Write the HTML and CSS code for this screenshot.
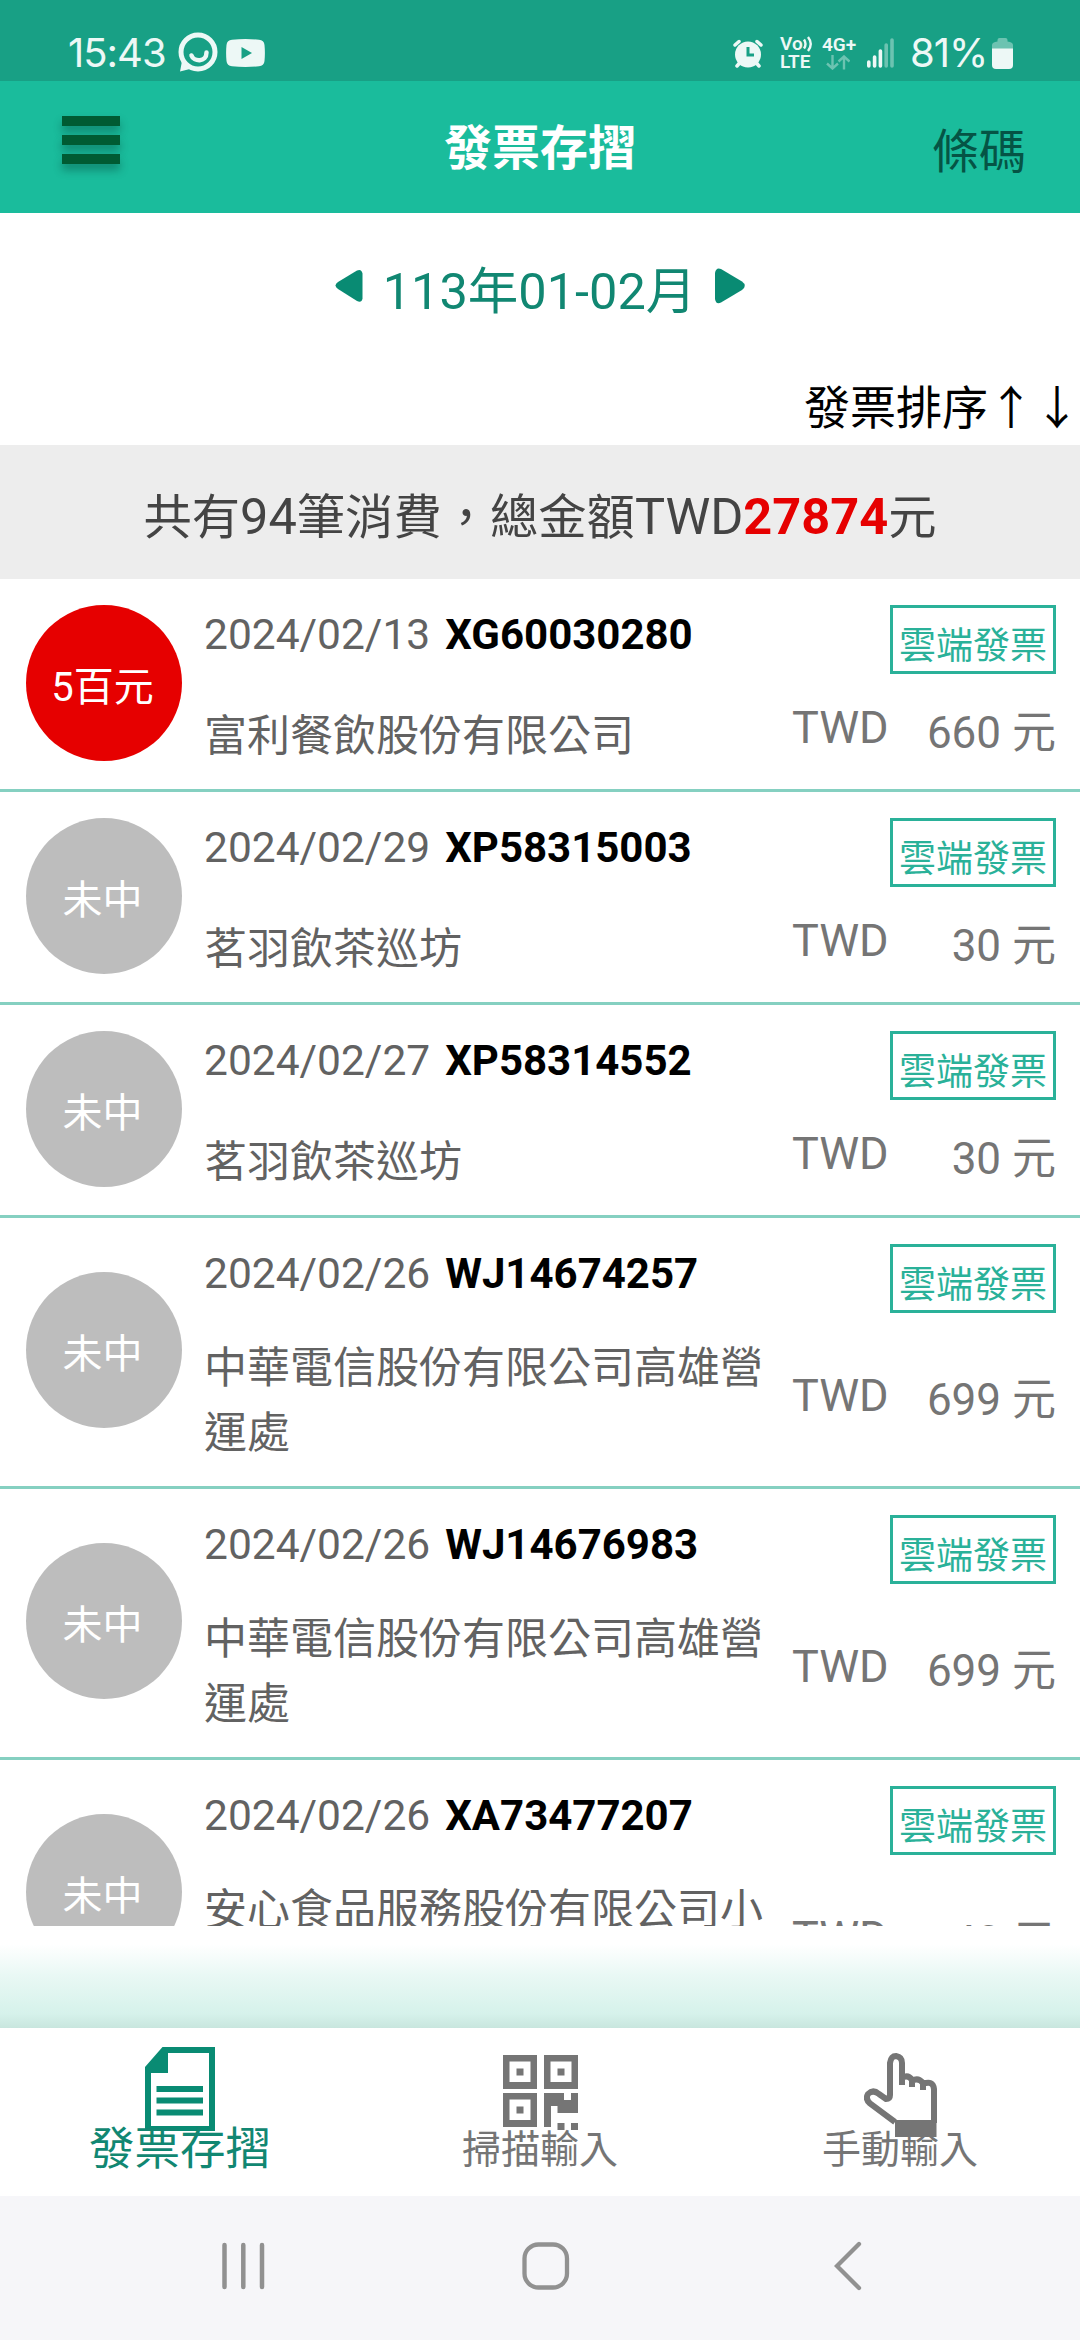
FILE: index.html
```
<!DOCTYPE html>
<html lang="zh-TW">
<head>
    <meta charset="UTF-8">
    <meta name="viewport" content="width=device-width, initial-scale=1.0">
    <title>發票存摺</title>
    <link rel="stylesheet" href="styles.css">
</head>
<body>

<div class="status-bar">
    <div class="status-left">
        <span class="clock">15:43</span>
        <svg class="icon-chat" width="40" height="42" viewBox="0 0 40 42">
            <circle cx="20" cy="20" r="17" fill="none" stroke="#edf8f6" stroke-width="5"/>
            <path d="M4 29 L2 39.5 L12 37 Z" fill="#edf8f6"/>
            <path d="M13.5 23.5 C15.5 29.5 28.5 31 28.5 20.5" fill="none" stroke="#edf8f6" stroke-width="4.5" stroke-linecap="round"/>
        </svg>
        <svg width="39" height="28" viewBox="0 0 39 28">
            <path d="M6 .7 Q19.500 -.5 33 .7 Q38 1 38.500 6 Q39.300 14 38.500 22 Q38 27 33 27.300 Q19.500 28.500 6 27.300 Q1 27 .5 22 Q-.3 14 .5 6 Q1 1 6 .7 Z" fill="#edf8f6"/>
            <path d="M15.500 8 L26 14 L15.500 20 Z" fill="#18a085"/>
        </svg>
    </div>
    <div class="status-right">
        <svg class="icon-alarm" width="30" height="29" viewBox="0 0 30 29">
            <circle cx="15" cy="15.500" r="13" fill="#edf8f6"/>
            <path d="M2 6 L6 2.500 M28 6 L24 2.500" stroke="#edf8f6" stroke-width="3.500" stroke-linecap="round"/>
            <path d="M4 27 L7 23.500 M26 27 L23 23.500" stroke="#edf8f6" stroke-width="3.500" stroke-linecap="round"/>
            <path d="M15 8 V16 H21" fill="none" stroke="#18a085" stroke-width="3"/>
        </svg>
        <div class="volte">
            <span>Vo<svg width="10" height="16" viewBox="0 0 10 16"><path d="M1 3.500 Q4 8 1 12.500 M5 1 Q10.500 8 5 15" fill="none" stroke="#edf8f6" stroke-width="2.400"/></svg></span>
            <span>LTE</span>
        </div>
        <div class="network">
            <span>4G+</span>
            <svg width="24" height="15" viewBox="0 0 24 15">
                <path d="M6.500 0 V13 M1 8.500 L6.500 13.500 L12 8.500 M18 14.500 V2 M12.500 6.500 L18 1.500 L23.500 6.500" fill="none" stroke="#6cc3b1" stroke-width="2.400"/>
            </svg>
        </div>
        <svg class="icon-signal" width="28" height="30" viewBox="0 0 28 30">
            <path d="M1.800 24 V28 M7.600 19 V28 M13.400 13 V28" stroke="#edf8f6" stroke-width="3.600" stroke-linecap="round"/>
            <path d="M19.200 7 V28 M25 2 V28" stroke="#6cc3b1" stroke-width="3.600" stroke-linecap="round"/>
        </svg>
        <span class="battery-text">81%</span>
        <svg width="21" height="31" viewBox="0 0 21 31">
            <path d="M0 12 V7 Q0 4 5.500 3.500 V2 Q5.500 0 7.500 0 H13.500 Q15.500 0 15.500 2 V3.500 Q21 4 21 7 V12 Z" fill="#6cc3b1"/>
            <path d="M0 10.500 H21 V27 Q21 31 17 31 H4 Q0 31 0 27 Z" fill="#edf8f6"/>
        </svg>
    </div>
</div>

<header>
    <button class="menu-btn" aria-label="選單">
        <span></span>
        <span></span>
        <span></span>
    </button>
    <h1>發票存摺</h1>
    <a class="barcode-link">條碼</a>
</header>

<div class="month-picker">
    <svg width="28" height="34" viewBox="0 0 28 34">
        <path d="M27.500 4.500 V29.500 Q26.500 34.500 22 32 L3 20 Q-2 16.500 3 13 L22 1.500 Q26.500 -.5 27.500 4.500 Z" fill="#098b73"/>
    </svg>
    <span class="month">113年01-02月</span>
    <svg class="next" width="30" height="36" viewBox="0 0 30 36">
        <path d="M0 5 V31 Q1 37 6 34.500 L27 22 Q32.500 17.500 27 13.500 L6 1 Q1 -1 0 5 Z" fill="#098b73"/>
    </svg>
</div>

<div class="sort">發票排序↑↓</div>

<div class="summary">共有<span>94</span>筆消費，總金額<span>TWD<b>27874</b></span>元</div>

<div class="invoice-list">
    <div class="invoice">
        <div class="prize win">5百元</div>
        <div class="info">
            <div class="top">
                <span class="date">2024/02/13</span>
                <span class="number">XG60030280</span>
                <span class="tag">雲端發票</span>
            </div>
            <div class="bottom">
                <div class="company">富利餐飲股份有限公司</div>
                <div class="currency">TWD</div>
                <div class="amount">660 元</div>
            </div>
        </div>
    </div>

    <div class="invoice">
        <div class="prize">未中</div>
        <div class="info">
            <div class="top">
                <span class="date">2024/02/29</span>
                <span class="number">XP58315003</span>
                <span class="tag">雲端發票</span>
            </div>
            <div class="bottom">
                <div class="company">茗羽飲茶巡坊</div>
                <div class="currency">TWD</div>
                <div class="amount">30 元</div>
            </div>
        </div>
    </div>

    <div class="invoice">
        <div class="prize">未中</div>
        <div class="info">
            <div class="top">
                <span class="date">2024/02/27</span>
                <span class="number">XP58314552</span>
                <span class="tag">雲端發票</span>
            </div>
            <div class="bottom">
                <div class="company">茗羽飲茶巡坊</div>
                <div class="currency">TWD</div>
                <div class="amount">30 元</div>
            </div>
        </div>
    </div>

    <div class="invoice tall">
        <div class="prize">未中</div>
        <div class="info">
            <div class="top">
                <span class="date">2024/02/26</span>
                <span class="number">WJ14674257</span>
                <span class="tag">雲端發票</span>
            </div>
            <div class="bottom">
                <div class="company">中華電信股份有限公司高雄營運處</div>
                <div class="currency">TWD</div>
                <div class="amount">699 元</div>
            </div>
        </div>
    </div>

    <div class="invoice tall">
        <div class="prize">未中</div>
        <div class="info">
            <div class="top">
                <span class="date">2024/02/26</span>
                <span class="number">WJ14676983</span>
                <span class="tag">雲端發票</span>
            </div>
            <div class="bottom">
                <div class="company">中華電信股份有限公司高雄營運處</div>
                <div class="currency">TWD</div>
                <div class="amount">699 元</div>
            </div>
        </div>
    </div>

    <div class="invoice tall">
        <div class="prize">未中</div>
        <div class="info">
            <div class="top">
                <span class="date">2024/02/26</span>
                <span class="number">XA73477207</span>
                <span class="tag">雲端發票</span>
            </div>
            <div class="bottom">
                <div class="company">安心食品服務股份有限公司小</div>
                <div class="currency">TWD</div>
                <div class="amount">40 元</div>
            </div>
        </div>
    </div>
</div>

<div class="fade"></div>

<div class="tabs">
    <div class="tab active">
        <svg width="70" height="84" viewBox="0 0 70 84">
            <path d="M17.500 0 H70 V84 H0 V20 Z M23 6 V26 H6 V79 H64 V6 Z" fill="#098b73" fill-rule="evenodd"/>
            <path d="M11.500 42 H58 M11.500 53.500 H58 M11.500 65.500 H58" stroke="#098b73" stroke-width="6"/>
        </svg>
        <span>發票存摺</span>
    </div>
    <div class="tab">
        <svg width="75" height="76" viewBox="0 0 75 76">
            <g fill="#757575">
                <path d="M0 0 H34 V34 H0 Z M6.500 6.500 V27 H27.500 V6.500 Z" fill-rule="evenodd"/>
                <path d="M41 0 H75 V34 H41 Z M47.500 6.500 V27 H68.500 V6.500 Z" fill-rule="evenodd"/>
                <path d="M0 38 H34 V72 H0 Z M6.500 44.500 V65 H27.500 V44.500 Z" fill-rule="evenodd"/>
                <path d="M13.500 13.500 h7 v7 h-7 Z M54.500 13.500 h7 v7 h-7 Z M13.500 51.500 h7 v7 h-7 Z"/>
                <path d="M41 38 H61 V45 H68 V38 H75 V58 H54.500 V51 H48 V72 H41 Z"/>
                <path d="M54.500 68 h7 v7 h-7 Z M68 68 h7 v7 h-7 Z"/>
            </g>
        </svg>
        <span>掃描輸入</span>
    </div>
    <div class="tab hand">
        <svg width="73" height="84" viewBox="0 0 73 84">
            <path d="M31 69 L6 50.500 Q1 46 4 41 Q9 36 15 41 L22 46 Q26 46 26 42 V10 Q27 3 32 3 Q38 4 38 10 V32 V25 Q44 21 48 27 V34 V28 Q54 24 59 30 V37 V31 Q69 27 70 36 V70" fill="none" stroke="#757575" stroke-width="6"/>
            <path d="M31 67 H72.500 V84 H31 Z" fill="#757575"/>
        </svg>
        <span>手動輸入</span>
    </div>
</div>

<div class="nav-bar">
    <svg width="43" height="48" viewBox="0 0 43 48">
        <path d="M2.500 3 V45 M21.300 3 V45 M40 3 V45" stroke="#919191" stroke-width="4.500" stroke-linecap="round"/>
    </svg>
    <svg class="home" width="48" height="48" viewBox="0 0 48 48">
        <rect x="2.500" y="2.500" width="42.500" height="43" rx="14" fill="none" stroke="#919191" stroke-width="4.300"/>
    </svg>
    <svg width="28" height="50" viewBox="0 0 28 50">
        <path d="M25 3 L3 25 L25 47" fill="none" stroke="#919191" stroke-width="4.300" stroke-linecap="round"/>
    </svg>
</div>

</body>
</html>
```
FILE: styles.css
```
* {
    box-sizing: border-box;
}

body {
    font-family: Roboto, "Noto Sans CJK TC", sans-serif;
    margin: 0;
    padding: 0;
    width: 1080px;
    height: 2340px;
    overflow: hidden;
    background-color: #fff;
    display: flex;
    flex-direction: column;
}

body > * {
    flex: none;
}

svg {
    display: block;
    flex: none;
}

/* status bar */
.status-bar {
    height: 81px;
    background-color: #18a085;
    color: #edf8f6;
    display: flex;
    justify-content: space-between;
    padding: 25px 67px 0 68px;
    font-family: Inter, sans-serif;
}

.status-left, .status-right {
    display: flex;
    align-items: center;
    height: 56px;
}

.clock, .battery-text {
    font-size: 40px;
    line-height: 56px;
    letter-spacing: -1px;
}

.clock {
    width: 110px;
}

.icon-chat {
    margin-right: 8px;
}

.icon-alarm {
    margin-right: 17px;
}

.volte, .network {
    font-family: Roboto, sans-serif;
    font-weight: 600;
    font-size: 19px;
    line-height: 18px;
}

.volte {
    width: 33px;
    margin-right: 9px;
}

.volte span {
    display: flex;
    align-items: center;
}

.network {
    width: 34px;
    margin-right: 11px;
}

.network svg {
    margin: 1px 0 0 4px;
}

.icon-signal {
    margin-right: 15px;
}

.battery-text {
    width: 82px;
}

/* app header */
header {
    height: 132px;
    background-color: #1abc9c;
    display: flex;
    justify-content: space-between;
    align-items: center;
    padding: 0 54px 0 62px;
}

.menu-btn {
    width: 94px;
    height: 48px;
    margin: 0 0 14px;
    padding: 0;
    border: none;
    background: none;
    display: flex;
    flex-direction: column;
    justify-content: space-between;
}

.menu-btn span {
    width: 58px;
    height: 10px;
    background-color: #005b33;
    box-shadow: 0 6px 8px rgba(0, 60, 50, 0.4);
}

h1 {
    margin: 0 0 0 -8px;
    font-size: 48px;
    line-height: 60px;
    font-weight: 700;
    color: #fff;
    padding-top: 4px;
}

.barcode-link {
    font-size: 47px;
    line-height: 60px;
    color: #055445;
    padding-top: 9px;
}

/* month and sorting */
.month-picker {
    height: 146px;
    display: flex;
    justify-content: center;
    align-items: center;
    color: #118772;
}

.month {
    font-size: 50.5px;
    line-height: 60px;
    margin: 12px 19px 0 20px;
}

.sort {
    height: 86px;
    font-size: 46px;
    line-height: 99px;
    text-align: right;
    color: #000;
}

.summary {
    height: 134px;
    background-color: #ededed;
    color: #444;
    font-size: 48.3px;
    line-height: 146px;
    text-align: center;
}

.summary span {
    font-size: 50.5px;
    line-height: 1;
}

.summary b {
    color: #e60000;
}

/* invoices */
.invoice-list {
    height: 1347px;
    overflow: hidden;
}

.invoice {
    display: flex;
    align-items: center;
    border-bottom: 3px solid #85d0c1;
    padding-left: 26px;
}

.prize {
    width: 156px;
    height: 156px;
    flex: none;
    margin-bottom: 2px;
    border-radius: 50%;
    background-color: #bdbdbd;
    color: #fff;
    font-size: 40px;
    line-height: 166px;
    text-align: center;
    padding-right: 3px;
}

.prize.win {
    background-color: #e60000;
}

.info {
    flex: 1;
    padding: 26px 24px 21px 22px;
}

.top {
    display: flex;
    align-items: flex-start;
    height: 91px;
    font-size: 42.5px;
    line-height: 60px;
}

.date {
    color: #626262;
    margin-right: 15px;
}

.number {
    color: #000;
    font-size: 42px;
    font-weight: 700;
}

.tag {
    width: 166px;
    height: 69px;
    margin-left: auto;
    border: 3px solid #2ab199;
    color: #2ab199;
    font-size: 37px;
    line-height: 50px;
    white-space: nowrap;
    display: flex;
    justify-content: center;
    padding-top: 14px;
}

.bottom {
    display: flex;
    align-items: center;
    min-height: 72px;
    color: #757575;
}

.company {
    width: 575px;
    margin: 0 13px -1px 0;
    align-self: flex-end;
    font-size: 43px;
    line-height: 65px;
    color: #626262;
}

.currency {
    font-size: 45px;
    line-height: 50px;
    padding-bottom: 9px;
}

.amount {
    margin-left: auto;
    font-size: 44px;
    line-height: 50px;
    padding-top: 2px;
}

/* rows with a two line company name */
.tall .prize {
    margin-bottom: 4px;
}

.tall .bottom {
    height: 130px;
}

.tall .company {
    align-self: flex-start;
    padding-top: 1px;
}

.tall .currency {
    padding-bottom: 8px;
}

.tall .amount {
    padding-top: 0;
}

.fade {
    height: 102px;
    background: linear-gradient(#fff 0%, #fff 18%, #e8f8f4 50%, #d6f2eb 86%, #c8e6de 100%);
}

/* bottom tabs */
.tabs {
    height: 168px;
    display: flex;
    background-color: #fff;
}

.tab {
    flex: 1;
    display: flex;
    flex-direction: column;
    align-items: center;
    padding-top: 27px;
    color: #757575;
    font-size: 39px;
    line-height: 50px;
}

.tab svg {
    margin-bottom: -6px;
}

.tab.active {
    padding-top: 19px;
    color: #118772;
    font-size: 45.5px;
}

.tab.hand {
    padding-top: 25px;
}

.tab.hand svg {
    margin-bottom: -12px;
}

/* system navigation */
.nav-bar {
    height: 144px;
    background-color: #f6f6f9;
    display: flex;
    justify-content: space-between;
    align-items: center;
    padding: 0 218px 4px 222px;
}

.home {
    margin-right: 8px;
}
```
